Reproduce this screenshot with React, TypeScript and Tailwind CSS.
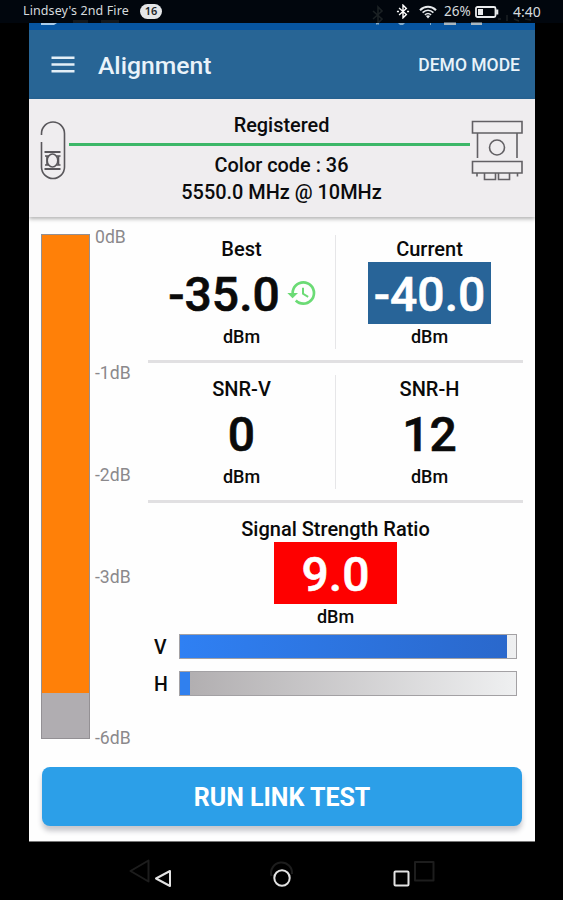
import React from "react";
import { MdHistory } from "react-icons/md";

const SCALE_MARKS = [
  { label: "0dB", offset: "mt-[9px]" },
  { label: "-1dB", offset: "mt-[114px]" },
  { label: "-2dB", offset: "mt-20" },
  { label: "-3dB", offset: "mt-20" },
  { label: "-6dB", offset: "mt-[139px]" },
];

const RATIO_BARS = [
  { label: "V", percent: 97.3, fill: "bg-linear-to-r from-[#2f80f3] to-[#2a68cc]" },
  { label: "H", percent: 3.1, fill: "bg-[#3080ee]" },
];

function BluetoothIcon({ className }: { className?: string }) {
  return (
    <svg className={className} viewBox="0 0 14 16" fill="none" stroke="currentColor" strokeWidth="1.5">
      <path d="M2.8 4.3 10.6 11.3 7 14.8V1.2L10.6 4.7 2.8 11.7" />
      <path d="M0.5 8h2.2M11.3 8h2.2" strokeWidth="1.8" />
    </svg>
  );
}

function WifiIcon({ className }: { className?: string }) {
  return (
    <svg className={className} viewBox="0 0 18 14" fill="none" stroke="currentColor">
      <path d="M1 5.2C5.6 0.6 12.4 0.6 17 5.2" strokeWidth="2.1" />
      <path d="M3.6 7.7C6.8 4.6 11.2 4.6 14.4 7.7" strokeWidth="1.7" />
      <path d="M5.9 9.9C7.8 8.2 10.2 8.2 12.1 9.9" strokeWidth="1.5" />
      <path d="M6.9 11 9 13.5 11.1 11C9.8 10 8.2 10 6.9 11Z" fill="currentColor" stroke="none" />
    </svg>
  );
}

function StatusBar() {
  return (
    <header className="relative flex h-[23px] shrink-0 items-center bg-[#01060d] pl-[23px] pr-[22px] font-['Noto_Sans'] text-[13px] text-[#d5dade]">
      <span className="w-[106px] whitespace-nowrap text-[12.5px] tracking-[0.1px]">Lindsey's 2nd Fire</span>
      <span className="ml-[11px] flex h-[15px] w-[22px] items-center justify-center rounded-full bg-[#e4e6e8] text-[11px] font-semibold text-[#20252a]">
        16
      </span>
      <BluetoothIcon className="ml-auto h-[15px] w-[14px] text-white" />
      <WifiIcon className="ml-[9px] h-[14px] w-[18px] text-[#e6e9eb]" />
      <span className="ml-[7px] w-7 whitespace-nowrap text-[13.5px]">26%</span>
      <svg className="ml-[3px] h-3 w-6" viewBox="0 0 24 12" fill="none">
        <rect x="1" y="1" width="19.5" height="10" rx="1.5" stroke="#e9ebed" strokeWidth="1.8" />
        <rect x="3" y="3" width="5" height="6" fill="#e9ebed" />
        <path d="M22.2 3.5v5" stroke="#e9ebed" strokeWidth="2.2" />
      </svg>
      <span className="ml-[14px] w-7 whitespace-nowrap text-[14px]">4:40</span>

      {/* Faded indicators left over from the bar underneath */}
      <svg className="absolute left-0 top-0 h-[26px] w-[563px]" viewBox="0 0 563 26" fill="none">
        <path d="M41 23h16l-3 2H41z" fill="#a9cdec" />
        <path d="M73 20h15v3H73zM101 20h18v3h-18z" fill="#14191e" />
        <path d="M373 11l9 8-4 4V7l4 4-9 8" stroke="#1b2124" strokeWidth="1.6" />
        <path d="M376 23h3v1.5h-3zM398 23h7l-2 2h-3zM430 23h1v2h-1z" fill="#83aed0" />
        <path d="M444 22.5h12v2.5h-12zM471 22.5h11v2.5h-11z" fill="#a9b8c2" />
        <path d="M498 19h3M507 15v6M514 19l5 2M525 19l6 1" stroke="#1b2124" strokeWidth="1.5" />
      </svg>
    </header>
  );
}

function AppBar() {
  return (
    <div className="flex h-[76px] shrink-0 items-center border-t-[7px] border-[#0755a0] bg-[#286595] pl-[22px] pr-[15px] text-white">
      <svg className="h-[17px] w-6 text-[#e4eff7]" viewBox="0 0 24 17" stroke="currentColor" strokeWidth="2.5">
        <path d="M0.5 1.7h23M0.5 8.5h23M0.5 15.3h23" />
      </svg>
      <h1 className="ml-[23px] pt-0.5 text-[24.7px] font-medium text-[#e9f3fa]">Alignment</h1>
      <span className="ml-auto pt-0.5 text-[17.5px] font-medium text-[#e9f3fa]">DEMO MODE</span>
    </div>
  );
}

function LinkStatus() {
  return (
    <section className="flex h-[118px] shrink-0 bg-[#efedef] pl-[11px] pr-[11px] pt-[21px] text-[#0b0b0d] shadow-[0_2px_4px_rgba(0,0,0,0.3)]">
      <svg className="h-[62px] w-[29px] shrink-0" viewBox="0 0 29 62" fill="none" stroke="#59575b" strokeWidth="1.6">
        <path d="M1.5 15v-1.5a11.5 11.5 0 0 1 23 0V47a11.5 11.5 0 0 1-23 0V22" />
        <path d="M4.5 32h16M4.5 49h16" strokeWidth="2" />
        <path d="M5 36h4M16.5 36h4M5 45h4M16.5 45h4M7 36v9M18.5 36v9" />
        <ellipse cx="12.5" cy="40.5" rx="5.3" ry="6.5" />
      </svg>
      <div className="flex flex-1 flex-col text-center text-[19.9px] font-medium leading-[26px]">
        <span className="-mt-[7px] pl-6">Registered</span>
        <div className="mt-1 h-[3px] w-full bg-[#3cb768]" />
        <span className="mt-[7px] pl-6">Color code : 36</span>
        <span className="mt-px pl-6">5550.0 MHz @ 10MHz</span>
      </div>
      <svg className="h-[62px] w-[54px] shrink-0" viewBox="0 0 54 62" fill="none" stroke="#626064" strokeWidth="1.6">
        <path d="M2.5 1.5h49.5v11.5H2.5zM2.5 41.5h49.5v11.5H2.5z" />
        <path d="M7.5 13v25M47 13v25" />
        <circle cx="27" cy="27.5" r="7.5" />
        <path d="M14.5 53v6.5h11V53M28.5 53v6.5h11V53M7 53v3.5M47.5 53v3.5" />
      </svg>
    </section>
  );
}

interface ReadingProps {
  title: string;
  value: string;
  highlight?: string;
  icon?: React.ReactNode;
}

function Reading({ title, value, highlight, icon }: ReadingProps) {
  return (
    <div className="flex flex-1 flex-col items-center font-medium text-[#0a0a0a]">
      <span className="text-[20px] leading-[26px]">{title}</span>
      <div className={`flex h-[62px] items-center justify-center pt-1 text-[48px] leading-none ${highlight ? `w-[123px] text-white ${highlight}` : ""}`}>
        <span className="[-webkit-text-stroke:0.6px_currentColor]">{value}</span>
        {icon}
      </div>
      <span className="text-[18px] leading-[26px]">dBm</span>
    </div>
  );
}

function LevelMeter() {
  return (
    <div className="flex w-[119px] shrink-0 pl-3">
      <div className="mt-[17px] h-[505px] w-[49px] shrink-0 border border-[#939094] bg-[#b0adb1]">
        <div className="h-[458px] bg-[#ff8008]" />
      </div>
      <div className="ml-[5px] flex flex-col text-[17.6px] leading-[22px] text-[#8b898c]">
        {SCALE_MARKS.map((mark) => (
          <span key={mark.label} className={mark.offset}>{mark.label}</span>
        ))}
      </div>
    </div>
  );
}

export default function App() {
  return (
    <div className="flex h-[900px] w-[563px] flex-col bg-black font-['Roboto',sans-serif]">
      <StatusBar />

      <main className="ml-[29px] flex h-[819px] w-[506px] shrink-0 flex-col border-b border-[#777] bg-[#fefefe]">
        <AppBar />
        <LinkStatus />

        <div className="flex h-[550px] shrink-0">
          <LevelMeter />

          <div className="flex w-[375px] flex-col">
            {/* Power levels */}
            <div className="flex h-[146px] border-b-[3px] border-[#e1e0e2] pt-[19px]">
              <Reading
                title="Best"
                value="-35.0"
                icon={<MdHistory className="-mr-[3px] -mt-[5px] ml-[6px] h-8 w-8 text-[#6bdb75]" />}
              />
              <div className="-mt-px h-[114px] w-px bg-[#e6e6e8]" />
              <Reading title="Current" value="-40.0" highlight="bg-[#286498]" />
            </div>

            {/* Signal to noise */}
            <div className="flex h-[140px] border-b-[3px] border-[#e1e0e2] pt-[13px]">
              <Reading title="SNR-V" value="0" />
              <div className="-mt-px h-[114px] w-px bg-[#e6e6e8]" />
              <Reading title="SNR-H" value="12" />
            </div>

            <div className="flex h-[131px] pt-[13px]">
              <Reading title="Signal Strength Ratio" value="9.0" highlight="bg-[#fe0000]" />
            </div>

            <div className="flex flex-col gap-3">
              {RATIO_BARS.map((bar) => (
                <div key={bar.label} className="flex h-[25px] items-center pl-[6px] pr-[6px]">
                  <span className="w-[25px] pt-[3px] text-[19.5px] font-medium text-[#0a0a0a]">{bar.label}</span>
                  <div className="h-[25px] flex-1 border border-[#a3a1a4] bg-linear-to-r from-[#b0adaf] to-[#eff0f1]">
                    <div className={`h-full ${bar.fill}`} style={{ width: `${bar.percent}%` }} />
                  </div>
                </div>
              ))}
            </div>
          </div>
        </div>

        <button className="ml-[13px] h-[59px] w-[480px] shrink-0 rounded-lg bg-[#2c9fe8] pt-0.5 text-[25px] font-bold text-white shadow-[0_5px_5px_rgba(40,40,60,0.25)]">
          RUN LINK TEST
        </button>
      </main>

      <nav>
        <svg className="h-[58px] w-[563px]" viewBox="0 842 563 58" fill="none" strokeWidth="2" strokeLinejoin="round">
          <g stroke="#1d1d1d">
            <path d="M148.5 860.5v21L130.5 871z" />
            <path d="M271.5 876a10.5 10.5 0 1 1 20.5-2" />
            <rect x="415" y="862" width="18.5" height="18.5" />
          </g>
          <g stroke="#e3e3e3">
            <path d="M170 871v15l-14-7.5z" />
            <circle cx="282" cy="878" r="7.7" />
            <rect x="394.5" y="871.5" width="14" height="14" rx="1" />
          </g>
        </svg>
      </nav>
    </div>
  );
}
